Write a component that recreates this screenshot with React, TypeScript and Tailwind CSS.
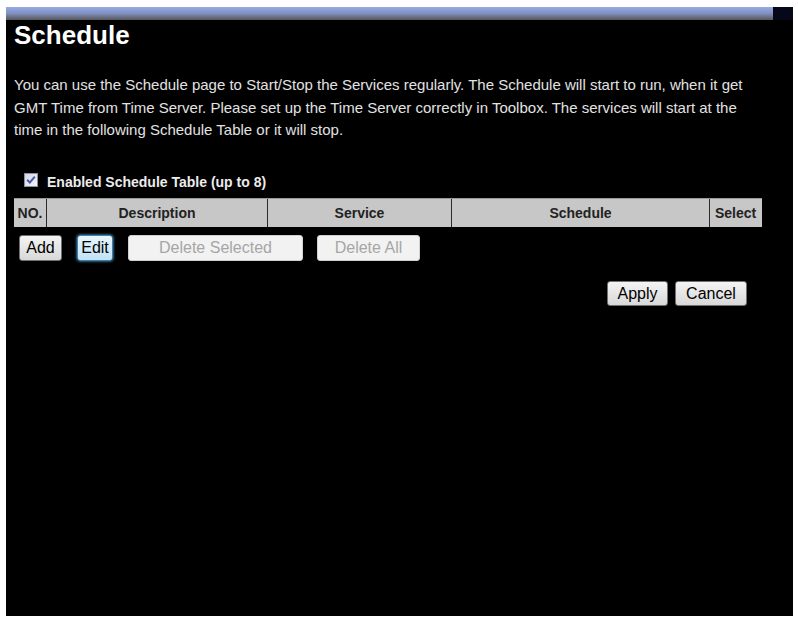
import React from "react";

const font = "font-['Liberation_Sans',Arial,sans-serif]";

function CheckBox() {
  return (
    <svg width="14" height="14" viewBox="0 0 14 14" className="mt-[1px] shrink-0">
      <defs>
        <linearGradient id="cbg" x1="0" y1="0" x2="1" y2="1">
          <stop offset="0" stopColor="#cfd5ea" />
          <stop offset="1" stopColor="#f4f6fc" />
        </linearGradient>
      </defs>
      <rect x="0.5" y="0.5" width="13" height="13" fill="url(#cbg)" stroke="#8e8f9a" />
      <path d="M3.2 6.8 L5.8 9.6 L10.8 3.6" fill="none" stroke="#4a57a6" strokeWidth="2" />
    </svg>
  );
}

const columns = [
  { label: "NO.", w: "w-[32px]" },
  { label: "Description", w: "w-[221px]" },
  { label: "Service", w: "w-[184px]" },
  { label: "Schedule", w: "w-[258px]" },
  { label: "Select", w: "w-[52px]" },
];

export default function App() {
  return (
    <div className={`min-h-screen bg-white pt-[7px] pl-[6px] ${font}`}>
      <div className="w-[787px] h-[609px] bg-black flex flex-col">
        <div className="flex h-[13px]">
          <div className="w-[767px] bg-gradient-to-b from-[#97aae6] via-[#8090c0] to-[#585858]" />
          <div className="flex-1 bg-[#07071a]" />
        </div>

        <div className="pl-[8px]">
          <h1 className="text-[26px] leading-[30px] font-bold text-white">Schedule</h1>

          <p className="mt-[24px] text-[15px] leading-[22.5px] text-[#e2e2e2] whitespace-nowrap">
            You can use the Schedule page to Start/Stop the Services regularly. The Schedule will start to run, when it get
            <br />
            GMT Time from Time Server. Please set up the Time Server correctly in Toolbox. The services will start at the
            <br />
            time in the following Schedule Table or it will stop.
          </p>

          <div className="mt-[30px] flex items-start h-[20px] pl-[10px] gap-[9px]">
            <CheckBox />
            <span className="text-[14px] leading-[20px] font-bold text-[#ececec]">
              Enabled Schedule Table (up to 8)
            </span>
          </div>

          <div className="mt-[6px] flex w-[748px] h-[29px] bg-[#c7c7c7] border-t border-[#9a9a9a]">
            {columns.map((c, i) => (
              <div
                key={c.label}
                className={`${c.w} ${i > 0 ? "border-l border-[#2a2a2a]" : ""} flex items-center justify-center pt-[2px] text-[14px] font-bold text-[#222]`}
              >
                {c.label}
              </div>
            ))}
          </div>

          <div className="mt-[8px] flex items-center h-[26px] pl-[5px]">
            <button className="h-[26px] w-[43px] rounded-[3px] border border-[#707070] bg-gradient-to-b from-[#f4f4f4] to-[#d8d8d8] text-[16px] text-black">
              Add
            </button>
            <button className="ml-[15px] h-[26px] w-[36px] rounded-[3px] border border-[#3c7fb1] bg-gradient-to-b from-[#e8f6fd] to-[#bfe2f6] text-[16px] text-black shadow-[0_0_3px_#6fc0f0]">
              Edit
            </button>
            <button className="ml-[15px] h-[26px] w-[175px] rounded-[3px] border border-[#d0d0d0] bg-[#f2f2f2] text-[16px] text-[#a6a6a6]">
              Delete Selected
            </button>
            <button className="ml-[14px] h-[26px] w-[103px] rounded-[3px] border border-[#d0d0d0] bg-[#f2f2f2] text-[16px] text-[#a6a6a6]">
              Delete All
            </button>
          </div>

          <div className="mt-[20px] flex justify-end gap-[7px] w-[733px]">
            <button className="h-[25px] w-[61px] rounded-[3px] border border-[#707070] bg-gradient-to-b from-[#f4f4f4] to-[#d8d8d8] text-[16px] text-black">
              Apply
            </button>
            <button className="h-[25px] w-[72px] rounded-[3px] border border-[#707070] bg-gradient-to-b from-[#f4f4f4] to-[#d8d8d8] text-[16px] text-black">
              Cancel
            </button>
          </div>
        </div>
      </div>
    </div>
  );
}
